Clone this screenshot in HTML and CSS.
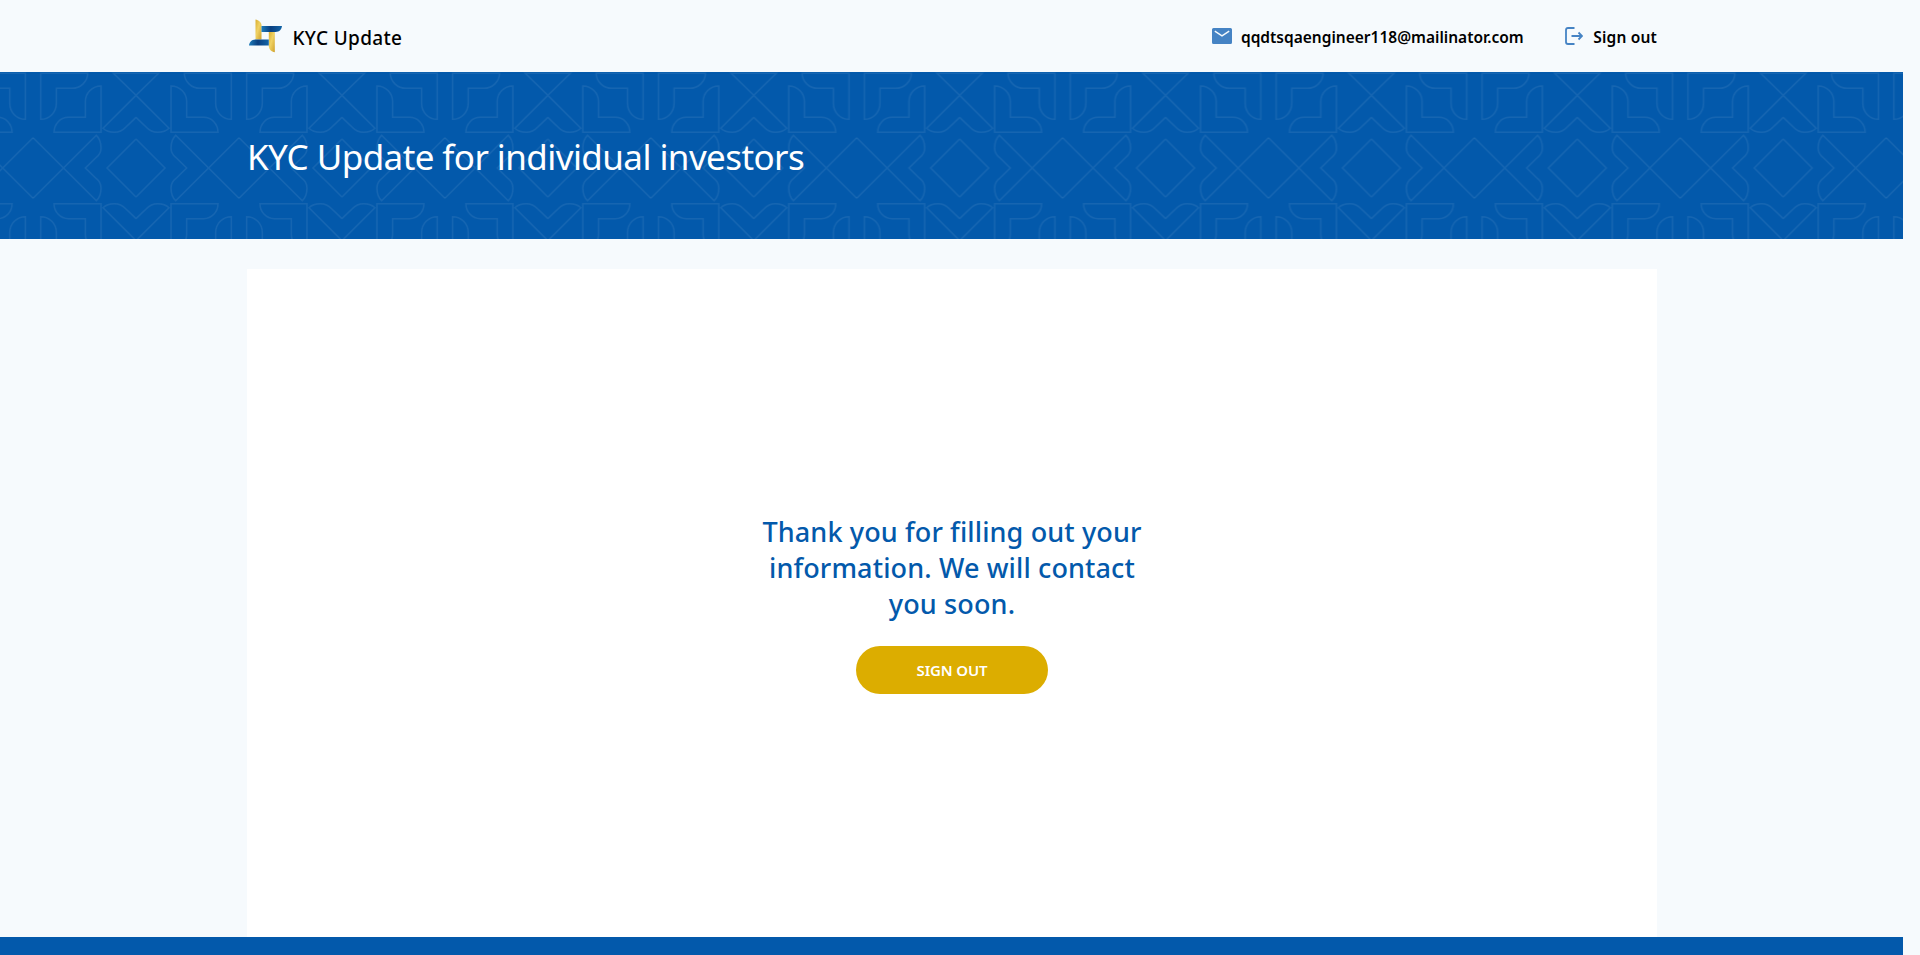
FILE: index.html
```html
<!DOCTYPE html>
<html lang="en">
<head>
<meta charset="utf-8">
<title>KYC Update</title>
<link rel="stylesheet" href="styles.css">
</head>
<body>
<div class="page">
  <header class="header">
    <div class="container header-row">
      <a class="brand">
        <svg class="logo" viewBox="0 0 34 34">
          <defs>
            <linearGradient id="gold" x1="0" y1="0" x2="1" y2="1"><stop offset="0" stop-color="#d9ae2f"/><stop offset=".45" stop-color="#f0d264"/><stop offset="1" stop-color="#cfa02a"/></linearGradient>
            <linearGradient id="sea" x1="0" y1="0" x2="1" y2="0"><stop offset="0" stop-color="#1e7cba"/><stop offset=".45" stop-color="#0a3f80"/><stop offset="1" stop-color="#1365a8"/></linearGradient>
          </defs>
          <path fill="url(#gold)" d="M7.500.5C10.500 1 13.500 3 13.500 6.500v14h-6z"/>
          <path fill="url(#sea)" d="M13.500 7H34C33.700 10 31.500 13 27.500 13h-14z"/>
          <path fill="url(#gold)" d="M20.800 13h6v20.200c-3.500-.3-6-3-6-6.500z"/>
          <path fill="url(#sea)" d="M7.500 20.500h13.300v6H1c.3-3.200 2.500-6 6.500-6z"/>
        </svg>
        <span class="brand-name">KYC Update</span>
      </a>
      <nav class="account">
        <span class="account-item">
          <svg class="icon-mail" viewBox="0 0 20 16"><path fill="#4583c4" d="M1.500 0h17A1.500 1.500 0 0 1 20 1.500v13a1.500 1.500 0 0 1-1.500 1.500h-17A1.500 1.500 0 0 1 0 14.500v-13A1.500 1.500 0 0 1 1.500 0z"/><path fill="none" stroke="#f6fafd" stroke-width="1.400" d="M2.800 3.200L10 7.800l7.200-4.600"/></svg>
          <span class="email">qqdtsqaengineer118@mailinator.com</span>
        </span>
        <span class="account-item account-item-out">
          <svg class="icon-out" viewBox="0 0 18 18" fill="none" stroke="#4583c4" stroke-width="1.800"><path d="M9.500 1H3Q1 1 1 3v12q0 2 2 2h6.500M6.500 9H17M13.500 5.500L17 9l-3.500 3.500"/></svg>
          <span class="signout">Sign out</span>
        </span>
      </nav>
    </div>
  </header>
  <section class="banner">
    <svg class="banner-art" width="1903" height="167" aria-hidden="true">
      <defs>
        <g id="half">
          <path d="M0-91L190 98Q204 85 204 60Q204 43 190 32L157 0L190-32Q204-43 204-60Q204-85 190-98L0 91"/>
          <g id="corner">
            <path d="M204-107H63C63-132 82-152 106-152H157V-199C157-225 178-246 204-246Z"/>
            <path d="M23-284V-146C49-146 70-167 70-194V-239H116C143-239 164-260 164-284Z"/>
            <path d="M309-152L278-122Q264-107 244-107Q222-107 210-119L309-218L377-284H309M309-218L241-284H309"/>
          </g>
          <use href="#corner" transform="scale(1 -1)"/>
          <path d="M309-87L222 0L309 87"/>
        </g>
        <pattern id="mosaic" width="618" height="618" patternUnits="userSpaceOnUse" patternTransform="translate(33.100 96) scale(.33317 .33333) translate(-309 -309)">
          <g transform="translate(309 309)" fill="none" stroke="#fff" stroke-opacity=".075" stroke-width="4.500">
            <use href="#half"/><use href="#half" transform="scale(-1 1)"/>
          </g>
        </pattern>
      </defs>
      <rect width="1903" height="167" fill="url(#mosaic)"/>
    </svg>
    <div class="container"><h1 class="banner-title">KYC Update for individual investors</h1></div>
  </section>
  <main class="container main">
    <div class="card">
      <p class="message">Thank you for filling out your<br>information. We will contact<br>you soon.</p>
      <button class="button"><span class="button-label">SIGN OUT</span></button>
    </div>
  </main>
  <footer class="footer"></footer>
</div>
</body>
</html>
```
FILE: styles.css
```css
* { box-sizing: border-box; }
body { margin: 0; background: #f6fafd; font-family: "Noto Sans", sans-serif; color: #000; overflow: hidden; }
.page { width: 1903px; height: 955px; display: flex; flex-direction: column; }
.container { width: 1410px; margin-left: 247px; }
.header { height: 72px; display: flex; }
.header-row { display: flex; align-items: center; justify-content: space-between; }
.brand { display: flex; align-items: center; gap: 10.500px; padding-left: 1px; }
.logo { width: 34px; height: 34px; }
.brand-name { font-size: 19px; letter-spacing: .35px; line-height: 28px; padding-top: 4px; font-weight: 500; white-space: nowrap; }
.account { display: flex; align-items: center; gap: 41px; }
.account-item { display: flex; align-items: center; gap: 9px; white-space: nowrap; font-size: 15.500px; font-weight: 600; line-height: 24px; }
.account-item-out { gap: 10.500px; letter-spacing: .18px; }
.icon-mail { width: 20px; height: 16px; }
.icon-out { width: 18px; height: 18px; }
.email, .signout { padding-top: 2px; }
.banner { height: 167px; background: #0359ab; position: relative; display: flex; align-items: center; }
.banner-art { position: absolute; left: 0; top: 0; }
.banner-title { position: relative; margin: 0; padding-top: 2px; color: #fff; font-size: 35px; letter-spacing: -.58px; font-weight: 400; line-height: 48px; white-space: nowrap; }
.main { padding-top: 30px; flex: 1; display: flex; }
.card { flex: 1; background: #fff; display: flex; flex-direction: column; align-items: center; padding-top: 245px; }
.message { margin: 0 0 24px; color: #0359ab; font-size: 27px; letter-spacing: .13px; line-height: 36px; font-weight: 500; text-align: center; white-space: nowrap; }
.button { width: 192px; height: 48px; border: 0; border-radius: 24px; background: #dcad00; color: #fff; font: 600 15px/24px "Noto Sans", sans-serif; letter-spacing: -.15px; padding: 0; }
.footer { height: 18px; background: #0359ab; }
```
